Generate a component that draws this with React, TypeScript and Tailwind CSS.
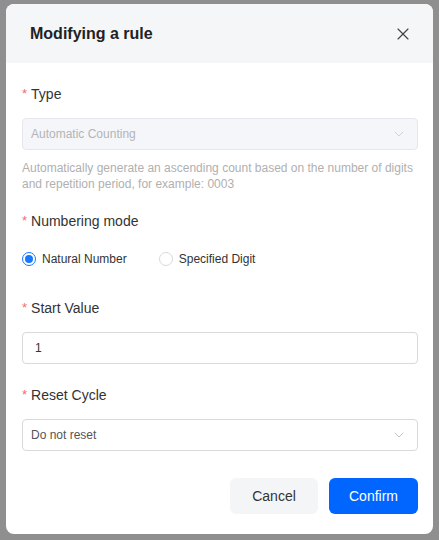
import { X, ChevronDown } from "lucide-react";

function Label({ text }: { text: string }) {
    return (
        <div className="flex items-center h-[22px] text-[14px] text-[#333]">
            <span className="text-[#f56c6c] text-[13px] mr-[4px] leading-none relative top-[-1px]">*</span>
            {text}
        </div>
    );
}

function Radio({ label, checked }: { label: string; checked?: boolean }) {
    return (
        <label className="flex items-center h-[22px] text-[12px] text-[#333]">
            <span
                className={
                    checked
                        ? "w-[14px] h-[14px] rounded-full border border-[#1677ff] flex items-center justify-center"
                        : "w-[14px] h-[14px] rounded-full border border-[#d9d9d9] bg-white"
                }
            >
                {checked && <span className="w-[8px] h-[8px] rounded-full bg-[#1677ff]" />}
            </span>
            <span className="ml-[6px]">{label}</span>
        </label>
    );
}

export default function App() {
    return (
        <div
            className="w-[439px] h-[540px] bg-[#8f8f8f] pt-[4px] pl-[6px]"
            style={{ fontFamily: '"Liberation Sans", Arial, sans-serif' }}
        >
            <div className="w-[427px] h-[530px] bg-white rounded-[8px] overflow-hidden flex flex-col">
                <div className="h-[59px] bg-[#f5f6f8] flex items-center justify-between pl-[24px] pr-[20px] shrink-0">
                    <h1 className="text-[16px] font-bold text-[#222]">Modifying a rule</h1>
                    <X size={20} strokeWidth={1.4} className="text-[#444]" />
                </div>

                <div className="pl-[16px] pr-[15px] pt-[20px] pb-[20px] flex flex-col">
                    <Label text="Type" />
                    <div className="mt-[13px] h-[32px] rounded-[4px] border border-[#e5e7ec] bg-[#f5f6fa] flex items-center justify-between pl-[8px] pr-[10px] text-[12px] text-[#b4b4b4]">
                        Automatic Counting
                        <ChevronDown size={16} strokeWidth={1.1} className="text-[#c0c4cc]" />
                    </div>
                    <p className="mt-[10px] text-[12px] leading-[16px] text-[#b0b0b0]">
                        Automatically generate an ascending count based on the number of digits and repetition period, for example: 0003
                    </p>

                    <div className="mt-[18px]">
                        <Label text="Numbering mode" />
                    </div>
                    <div className="mt-[16px] flex items-center gap-[32px]">
                        <Radio label="Natural Number" checked />
                        <Radio label="Specified Digit" />
                    </div>

                    <div className="mt-[27px]">
                        <Label text="Start Value" />
                    </div>
                    <div className="mt-[13px] h-[32px] rounded-[4px] border border-[#d9d9d9] bg-white flex items-center pl-[12px] text-[12px] text-[#333]">
                        1
                    </div>

                    <div className="mt-[20px]">
                        <Label text="Reset Cycle" />
                    </div>
                    <div className="mt-[13px] h-[32px] rounded-[4px] border border-[#d9d9d9] bg-white flex items-center justify-between pl-[8px] pr-[10px] text-[12px] text-[#555]">
                        Do not reset
                        <ChevronDown size={16} strokeWidth={1.1} className="text-[#b0b0b0]" />
                    </div>

                    <div className="mt-[27px] flex justify-end gap-[11px]">
                        <button className="w-[88px] h-[36px] rounded-[6px] bg-[#f4f5f7] text-[14px] text-[#333]">
                            Cancel
                        </button>
                        <button className="w-[89px] h-[36px] rounded-[6px] bg-[#0066ff] text-[14px] text-white">
                            Confirm
                        </button>
                    </div>
                </div>
            </div>
        </div>
    );
}
